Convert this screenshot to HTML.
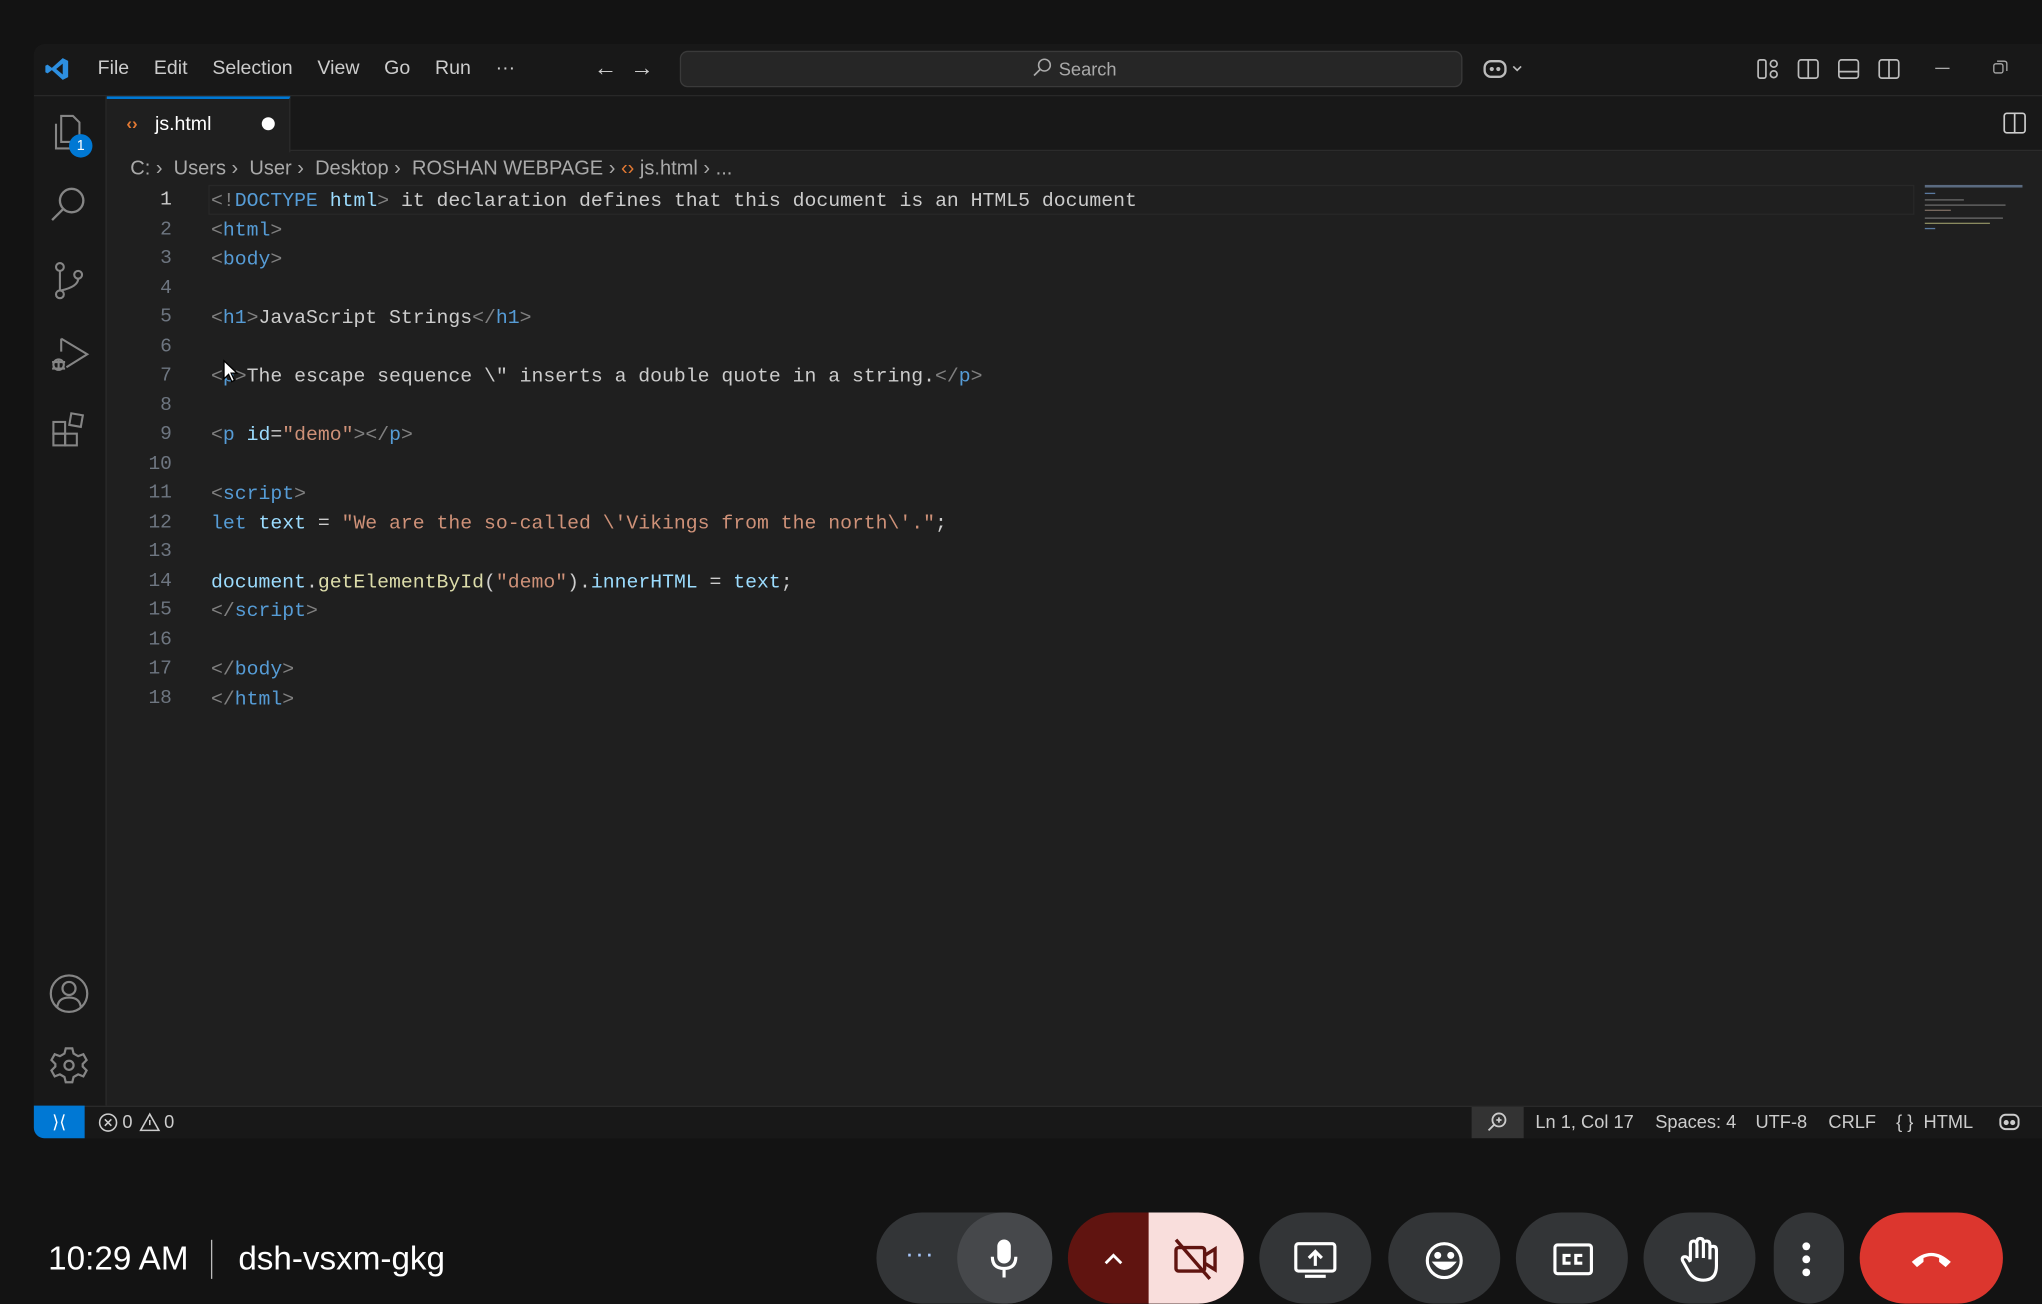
<!DOCTYPE html>
<html><head><meta charset="utf-8"><style>
*{margin:0;padding:0;box-sizing:border-box}
html,body{width:2042px;height:1284px;overflow:hidden;background:#131313}
#w{position:absolute;left:0;top:0;width:1568px;height:986px;transform:scale(1.30230);transform-origin:0 0;font-family:"Segoe UI","Liberation Sans",sans-serif;color:#ccc}
.a{position:absolute}
.code{position:absolute;left:162px;font-family:"Liberation Mono",monospace;font-size:15.2px;line-height:22.5px;white-space:pre;color:#cccccc}
.ln{position:absolute;left:90px;width:42px;text-align:right;font-family:"Liberation Mono",monospace;font-size:15px;line-height:22.5px;color:#6e7681}
.g{color:#808080}.t{color:#569cd6}.at{color:#9cdcfe}.s{color:#ce9178}.f{color:#dcdcaa}.k{color:#569cd6}.v{color:#9cdcfe}
.menu span{margin-right:19px;font-size:15px;color:#cccccc}
.btn{position:absolute;top:931px;height:70px;border-radius:35px;background:#333537}
svg{position:absolute}
.st{position:absolute;top:853px;font-size:14px;color:#cccccc}
</style></head><body><div id="w">
<div class="a" style="left:26px;top:34px;width:1542px;height:840px;background:#1f1f1f;border-radius:8px 0 0 8px;overflow:hidden">
</div>
<div class="a" style="left:26px;top:34px;width:1542px;height:40px;background:#181818;border-radius:8px 0 0 0;border-bottom:1px solid #2b2b2b"></div>
<svg style="left:34px;top:43px" width="20" height="20" viewBox="0 0 24 24"><path d="M17 2 L22 4.5 V19.5 L17 22 L7 13 L3 16 L1 15 V9 L3 8 L7 11 Z M17 7 L11 12 L17 17 Z" fill="#2d8fe0"/></svg>
<div class="a menu" style="left:75px;top:44px"><span>File</span><span>Edit</span><span>Selection</span><span>View</span><span>Go</span><span>Run</span><span>···</span></div>
<div class="a" style="left:456px;top:42px;font-size:18px;color:#ccc">←&nbsp;&nbsp;→</div>
<div class="a" style="left:522px;top:39px;width:601px;height:28px;background:#262626;border:1px solid #3a3a3a;border-radius:6px"></div>
<svg style="left:792px;top:44px" width="16" height="16" viewBox="0 0 16 16"><circle cx="10" cy="6" r="4.5" fill="none" stroke="#aaa" stroke-width="1.2"/><path d="M7 9 L2 14" stroke="#aaa" stroke-width="1.3"/></svg>
<div class="a" style="left:813px;top:45px;font-size:14px;color:#aaa">Search</div>
<svg style="left:1138px;top:43px" width="36" height="20" viewBox="0 0 36 20"><rect x="2" y="4" width="16" height="12" rx="5" fill="none" stroke="#bbb" stroke-width="1.8"/><circle cx="7.5" cy="10" r="1.6" fill="#bbb"/><circle cx="12.5" cy="10" r="1.6" fill="#bbb"/><path d="M24 8 L27 11 L30 8" fill="none" stroke="#bbb" stroke-width="1.3"/></svg>
<svg style="left:1349px;top:44px" width="120" height="18" viewBox="0 0 120 18" fill="none" stroke="#bbb" stroke-width="1.3"><rect x="1" y="2" width="6" height="14" rx="1.5"/><circle cx="13" cy="5" r="2.6"/><circle cx="13" cy="13" r="2.6"/><rect x="32" y="2" width="15" height="14" rx="2"/><path d="M39.5 2 V16"/><rect x="63" y="2" width="15" height="14" rx="2"/><path d="M63 11 H78"/><rect x="94" y="2" width="15" height="14" rx="2"/><path d="M101.5 2 V16"/></svg>
<div class="a" style="left:1486px;top:52px;width:11px;height:1px;background:#aaa"></div>
<svg style="left:1530px;top:46px" width="12" height="12" viewBox="0 0 12 12" fill="none" stroke="#aaa"><rect x="1" y="3" width="7" height="7" rx="1.5"/><path d="M3.5 1 H9 Q11 1 11 3 V8.5"/></svg>
<div class="a" style="left:26px;top:74px;width:56px;height:775px;background:#181818;border-right:1px solid #2b2b2b"></div>
<svg style="left:36px;top:85px" width="36" height="36" viewBox="0 0 36 36" fill="none" stroke="#858585" stroke-width="1.6"><path d="M11 4 H20 L25 9 V24 H11 Z"/><path d="M7 10 V29 H20"/></svg>
<div class="a" style="left:53px;top:103px;width:18px;height:18px;border-radius:9px;background:#0078d4;color:#fff;font-size:11px;text-align:center;line-height:18px">1</div>
<svg style="left:36px;top:141px" width="34" height="34" viewBox="0 0 34 34" fill="none" stroke="#858585" stroke-width="1.8"><circle cx="19" cy="13" r="9"/><path d="M12.5 19.5 L4 28"/></svg>
<svg style="left:38px;top:199px" width="30" height="34" viewBox="0 0 30 34" fill="none" stroke="#858585" stroke-width="1.6"><circle cx="8" cy="6" r="3"/><circle cx="8" cy="27" r="3"/><circle cx="22" cy="12" r="3"/><path d="M8 9 V24 M22 15 Q22 21 9 24"/></svg>
<svg style="left:37px;top:256px" width="34" height="34" viewBox="0 0 34 34" fill="none" stroke="#858585" stroke-width="1.6"><path d="M10 4 L30 16 L14 26"/><path d="M10 4 V14"/><circle cx="8" cy="24" r="4"/><path d="M3 22 H13 M3 27 H13 M8 20 V28"/></svg>
<svg style="left:38px;top:314px" width="32" height="32" viewBox="0 0 32 32" fill="none" stroke="#858585" stroke-width="1.6"><rect x="3" y="10" width="9" height="9"/><rect x="3" y="19" width="9" height="9"/><rect x="12" y="19" width="9" height="9"/><rect x="16" y="4" width="9" height="9" transform="rotate(10 20 8)"/></svg>
<svg style="left:37px;top:747px" width="32" height="32" viewBox="0 0 32 32" fill="none" stroke="#858585" stroke-width="1.7"><circle cx="16" cy="16" r="14"/><circle cx="16" cy="12" r="5"/><path d="M7 26 Q8 19 16 19 Q24 19 25 26"/></svg>
<svg style="left:37px;top:802px" width="32" height="32" viewBox="0 0 32 32" fill="none" stroke="#858585" stroke-width="1.7"><path d="M13.5 3 H18.5 L19.5 7 L23 9 L27 7.5 L29.5 12 L26.5 15 V17 L29.5 20 L27 24.5 L23 23 L19.5 25 L18.5 29 H13.5 L12.5 25 L9 23 L5 24.5 L2.5 20 L5.5 17 V15 L2.5 12 L5 7.5 L9 9 L12.5 7 Z"/><circle cx="16" cy="16" r="3.5"/></svg>
<div class="a" style="left:82px;top:74px;width:1486px;height:42px;background:#181818;border-bottom:1px solid #2b2b2b"></div>
<div class="a" style="left:82px;top:74px;width:141px;height:43px;background:#1f1f1f;border-top:2px solid #0078d4;border-right:1px solid #2b2b2b"></div>
<div class="a" style="left:97px;top:87px;font-size:13px;color:#e37933;font-weight:bold">‹›</div>
<div class="a" style="left:119px;top:87px;font-size:15px;color:#fff">js.html</div>
<div class="a" style="left:201px;top:90px;width:10px;height:10px;border-radius:5px;background:#fff"></div>
<svg style="left:1538px;top:86px" width="18" height="17" viewBox="0 0 18 17" fill="none" stroke="#ccc" stroke-width="1.3"><rect x="1" y="1" width="16" height="15" rx="2"/><path d="M9 1 V16"/></svg>
<div class="a" style="left:100px;top:121px;font-size:15.4px;color:#a9a9a9;white-space:pre">C: ›  Users ›  User ›  Desktop ›  ROSHAN WEBPAGE › <span style="color:#e37933">‹›</span> js.html › ...</div>
<div class="a" style="left:160px;top:142px;width:1310px;height:23px;border:1px solid #282828"></div>
<div class="ln" style="top:143px"><span style="color:#ccc">1</span><br>2<br>3<br>4<br>5<br>6<br>7<br>8<br>9<br>10<br>11<br>12<br>13<br>14<br>15<br>16<br>17<br>18</div>
<div class="code" style="top:143px"><span class="g">&lt;!</span><span class="t">DOCTYPE</span> <span class="at">html</span><span class="g">&gt;</span> it declaration defines that this document is an HTML5 document
<span class="g">&lt;</span><span class="t">html</span><span class="g">&gt;</span>
<span class="g">&lt;</span><span class="t">body</span><span class="g">&gt;</span>

<span class="g">&lt;</span><span class="t">h1</span><span class="g">&gt;</span>JavaScript Strings<span class="g">&lt;/</span><span class="t">h1</span><span class="g">&gt;</span>

<span class="g">&lt;</span><span class="t">p</span><span class="g">&gt;</span>The escape sequence \" inserts a double quote in a string.<span class="g">&lt;/</span><span class="t">p</span><span class="g">&gt;</span>

<span class="g">&lt;</span><span class="t">p</span> <span class="at">id</span>=<span class="s">"demo"</span><span class="g">&gt;&lt;/</span><span class="t">p</span><span class="g">&gt;</span>

<span class="g">&lt;</span><span class="t">script</span><span class="g">&gt;</span>
<span class="k">let</span> <span class="v">text</span> = <span class="s">"We are the so-called \'Vikings from the north\'."</span>;

<span class="v">document</span>.<span class="f">getElementById</span>(<span class="s">"demo"</span>).<span class="v">innerHTML</span> = <span class="v">text</span>;
<span class="g">&lt;/</span><span class="t">script</span><span class="g">&gt;</span>

<span class="g">&lt;/</span><span class="t">body</span><span class="g">&gt;</span>
<span class="g">&lt;/</span><span class="t">html</span><span class="g">&gt;</span></div>
<svg style="left:171px;top:276px" width="12" height="18" viewBox="0 0 12 18"><path d="M1 1 V15 L4.5 11.5 L7 17 L9 16 L6.5 10.5 H11 Z" fill="#fff" stroke="#000" stroke-width="1"/></svg>
<div class="a" style="left:1478px;top:142px;width:75px;height:2px;background:#5a6a80"></div>
<div class="a" style="left:1478px;top:148px;width:8px;height:1px;background:#5a7aa0"></div>
<div class="a" style="left:1478px;top:153px;width:30px;height:1px;background:#6a6a6a"></div>
<div class="a" style="left:1478px;top:157px;width:62px;height:1px;background:#6a6a6a"></div>
<div class="a" style="left:1478px;top:161px;width:20px;height:1px;background:#7a6a60"></div>
<div class="a" style="left:1478px;top:167px;width:60px;height:1px;background:#6a6a6a"></div>
<div class="a" style="left:1478px;top:171px;width:50px;height:1px;background:#8a8a60"></div>
<div class="a" style="left:1478px;top:175px;width:8px;height:1px;background:#5a7aa0"></div>
<div class="a" style="left:26px;top:849px;width:1542px;height:25px;background:#181818;border-top:1px solid #2b2b2b;border-radius:0 0 0 8px"></div>
<div class="a" style="left:26px;top:849px;width:39px;height:25px;background:#0078d4;border-radius:0 0 0 8px;color:#fff;font-size:14px;text-align:center;line-height:24px">⟩⟨</div>
<svg style="left:75px;top:854px" width="62" height="16" viewBox="0 0 62 16" fill="none" stroke="#ccc" stroke-width="1.2"><circle cx="8" cy="8" r="6.5"/><path d="M5.5 5.5 L10.5 10.5 M10.5 5.5 L5.5 10.5"/><path d="M40 1.5 L47 14 H33 Z"/><path d="M40 6 V10"/></svg>
<div class="st" style="left:94px">0</div><div class="st" style="left:126px">0</div>
<div class="a" style="left:1130px;top:850px;width:40px;height:24px;background:#333"></div>
<svg style="left:1141px;top:853px" width="18" height="18" viewBox="0 0 18 18" fill="none" stroke="#ccc" stroke-width="1.4"><circle cx="10" cy="7" r="5"/><path d="M6.5 10.5 L2 15 M8 7 H12 M10 5 V9"/></svg>
<div class="st" style="left:1179px">Ln 1, Col 17</div>
<div class="st" style="left:1271px">Spaces: 4</div>
<div class="st" style="left:1348px">UTF-8</div>
<div class="st" style="left:1404px">CRLF</div>
<div class="st" style="left:1456px">{ }&nbsp; HTML</div>
<svg style="left:1534px;top:853px" width="18" height="16" viewBox="0 0 18 16" fill="none" stroke="#ccc" stroke-width="1.5"><rect x="2" y="3" width="14" height="11" rx="4"/><circle cx="6.5" cy="9" r="1.2" fill="#ccc"/><circle cx="11.5" cy="9" r="1.2" fill="#ccc"/></svg>
<div class="a" style="left:37px;top:953px;font-size:25.5px;color:#fff;font-family:'Liberation Sans',sans-serif">10:29 AM</div>
<div class="a" style="left:162px;top:952px;width:1px;height:30px;background:#bbb"></div>
<div class="a" style="left:183px;top:953px;font-size:25.5px;color:#fff;font-family:'Liberation Sans',sans-serif">dsh-vsxm-gkg</div>
<div class="btn" style="left:673px;width:135px"></div>
<div class="btn" style="left:735px;width:73px;background:#46484b"></div>
<div class="a" style="left:695px;top:952px;color:#a8c7fa;font-size:20px;letter-spacing:1px">···</div>
<svg style="left:758px;top:951px" width="26" height="32" viewBox="0 0 26 32" fill="none" stroke="#fff" stroke-width="2.4"><rect x="9" y="2" width="8" height="16" rx="4" fill="#fff"/><path d="M4 14 Q4 23 13 23 Q22 23 22 14 M13 23 V30"/></svg>
<div class="btn" style="left:820px;width:135px;background:#601410"></div>
<div class="btn" style="left:882px;width:73px;background:#f9dedc;border-radius:0 35px 35px 0"></div>
<svg style="left:846px;top:960px" width="18" height="12" viewBox="0 0 18 12" fill="none" stroke="#fff" stroke-width="2.2"><path d="M3 10 L9 4 L15 10"/></svg>
<svg style="left:899px;top:950px" width="38" height="34" viewBox="0 0 38 34" fill="none" stroke="#601410" stroke-width="2.6"><rect x="4" y="8" width="22" height="18" rx="2"/><path d="M26 14 L34 9 V25 L26 20"/><path d="M4 2 L30 32"/></svg>
<div class="btn" style="left:967px;width:86px"></div>
<svg style="left:992px;top:952px" width="36" height="30" viewBox="0 0 36 30" fill="none" stroke="#fff" stroke-width="2.4"><rect x="3" y="3" width="30" height="21" rx="2"/><path d="M10 28 H26 M18 20 V9 M13 14 L18 9 L23 14"/></svg>
<div class="btn" style="left:1066px;width:86px"></div>
<svg style="left:1092px;top:951px" width="34" height="34" viewBox="0 0 34 34" fill="none" stroke="#fff" stroke-width="2.4"><circle cx="17" cy="17" r="13"/><circle cx="12" cy="13" r="1.5" fill="#fff"/><circle cx="22" cy="13" r="1.5" fill="#fff"/><path d="M10 19 Q17 27 24 19 Z" fill="#fff"/></svg>
<div class="btn" style="left:1164px;width:86px"></div>
<svg style="left:1191px;top:953px" width="34" height="28" viewBox="0 0 34 28" fill="none" stroke="#fff" stroke-width="2.4"><rect x="3" y="3" width="28" height="22" rx="2"/><path d="M15 11 H10 V17 H15 M24 11 H19 V17 H24"/></svg>
<div class="btn" style="left:1262px;width:86px"></div>
<svg style="left:1288px;top:948px" width="34" height="38" viewBox="0 0 34 38" fill="none" stroke="#fff" stroke-width="2.4"><path d="M10 20 V8 Q10 5 12.5 5 Q15 5 15 8 V18 M15 6 Q15 3 17.5 3 Q20 3 20 6 V18 M20 7 Q20 5 22.5 5 Q25 5 25 8 V19 M25 11 Q25 9 27.5 9 Q30 9 30 12 V24 Q30 35 20 35 Q13 35 9 29 L4 20 Q3 17 6 17 Q8 17 10 21"/></svg>
<div class="btn" style="left:1362px;width:54px"></div>
<div class="a" style="left:1384px;top:954px;width:6px;height:6px;border-radius:3px;background:#fff"></div>
<div class="a" style="left:1384px;top:964px;width:6px;height:6px;border-radius:3px;background:#fff"></div>
<div class="a" style="left:1384px;top:974px;width:6px;height:6px;border-radius:3px;background:#fff"></div>
<div class="btn" style="left:1428px;width:110px;background:#dc362e"></div>
<svg style="left:1465px;top:957px" width="36" height="20" viewBox="0 0 36 20"><path d="M3 12 Q18 -2 33 12 L29 16 L24 12 V9 Q18 6 12 9 V12 L7 16 Z" fill="#fff"/></svg>
</div></body></html>
